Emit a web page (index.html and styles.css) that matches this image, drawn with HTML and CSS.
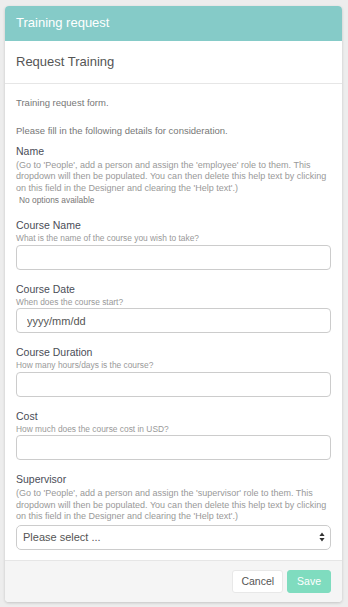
FILE: index.html
```html
<!DOCTYPE html>
<html lang="en">
<head>
    <meta charset="UTF-8">
    <meta name="viewport" content="width=device-width, initial-scale=1.0">
    <title>Training request</title>
    <link rel="stylesheet" href="styles.css">
</head>
<body>
    <div class="panel">
        <div class="panel-heading">Training request</div>
        <div class="panel-title">Request Training</div>
        <div class="panel-body">
            <p class="intro">Training request form.</p>
            <p class="intro">Please fill in the following details for consideration.</p>

            <div class="field">
                <label class="label">Name</label>
                <div class="note">(Go to 'People', add a person and assign the 'employee' role to them. This dropdown will then be populated. You can then delete this help text by clicking on this field in the Designer and clearing the 'Help text'.)</div>
                <div class="empty">No options available</div>
            </div>

            <div class="field">
                <label class="label">Course Name</label>
                <div class="help">What is the name of the course you wish to take?</div>
                <input class="input" type="text">
            </div>

            <div class="field">
                <label class="label">Course Date</label>
                <div class="help">When does the course start?</div>
                <input class="input" type="text" placeholder="yyyy/mm/dd">
            </div>

            <div class="field">
                <label class="label">Course Duration</label>
                <div class="help">How many hours/days is the course?</div>
                <input class="input" type="text">
            </div>

            <div class="field">
                <label class="label">Cost</label>
                <div class="help">How much does the course cost in USD?</div>
                <input class="input" type="text">
            </div>

            <div class="field">
                <label class="label">Supervisor</label>
                <div class="note">(Go to 'People', add a person and assign the 'supervisor' role to them. This dropdown will then be populated. You can then delete this help text by clicking on this field in the Designer and clearing the 'Help text'.)</div>
                <div class="select">
                    <span>Please select ...</span>
                    <svg class="caret" width="6" height="10" viewBox="0 0 6 10">
                        <path d="M3 0.5 L5.6 4 H0.4 Z M3 9.5 L5.6 6 H0.4 Z" fill="#333"/>
                    </svg>
                </div>
            </div>
        </div>
        <div class="panel-footer">
            <button class="btn">Cancel</button>
            <button class="btn btn-save">Save</button>
        </div>
    </div>
</body>
</html>
```

FILE: styles.css
```css
body {
    margin: 0;
    padding: 6px 6px 6px 5px;
    background-color: #ededed;
    font-family: "Liberation Sans", Arial, sans-serif;
}

.panel {
    width: 337px;
    background-color: #fff;
    border-radius: 4px;
    box-shadow: 0 1px 3px rgba(0, 0, 0, 0.18);
    overflow: hidden;
}

.panel-heading {
    height: 35px;
    line-height: 34px;
    padding-left: 11px;
    background-color: #85cbc8;
    color: #fff;
    font-size: 13px;
}

.panel-title {
    height: 42px;
    line-height: 41px;
    padding-left: 11px;
    border-bottom: 1px solid #e6e6e6;
    color: #555;
    font-size: 13px;
}

.panel-body {
    padding: 12px 11px 10px;
}

.intro {
    margin: 0 0 14.5px;
    font-size: 9.5px;
    line-height: 13px;
    color: #777;
}

.intro + .intro {
    margin-bottom: 8px;
}

.field {
    margin-bottom: 13px;
}

.field:last-child {
    margin-bottom: 0;
}

.label {
    display: block;
    font-size: 10.5px;
    line-height: 13px;
    color: #4a4d57;
}

.note {
    margin-top: 2px;
    font-size: 9px;
    line-height: 11.5px;
    color: #999;
}

.empty {
    padding-left: 3px;
    font-size: 8.4px;
    line-height: 12px;
    color: #777;
}

.help {
    margin-top: 1px;
    font-size: 8.4px;
    line-height: 11px;
    color: #999;
}

.input {
    display: block;
    box-sizing: border-box;
    width: 100%;
    height: 25px;
    margin-top: 0.5px;
    padding: 0 10px;
    border: 1px solid #ccc;
    border-radius: 4px;
    font-family: inherit;
    font-size: 11px;
    color: #555;
}

.input::placeholder {
    color: #555;
}

.select {
    display: flex;
    justify-content: space-between;
    align-items: center;
    box-sizing: border-box;
    height: 25px;
    margin-top: 2px;
    padding: 0 5px 0 6px;
    border: 1px solid #ccc;
    border-radius: 5px;
    font-size: 11px;
    color: #555;
}

.panel-footer {
    display: flex;
    justify-content: flex-end;
    gap: 4px;
    padding: 9px 11px;
    border-top: 1px solid #e6e6e6;
    background-color: #f5f5f5;
}

.btn {
    height: 23px;
    padding: 0 8px;
    border: 1px solid #e8e8e8;
    border-radius: 3px;
    background-color: #fff;
    font-family: inherit;
    font-size: 10.5px;
    color: #555;
}

.btn-save {
    padding: 0 9px;
    border-color: #7fdcbf;
    background-color: #7fdcbf;
    color: #fff;
}
```
